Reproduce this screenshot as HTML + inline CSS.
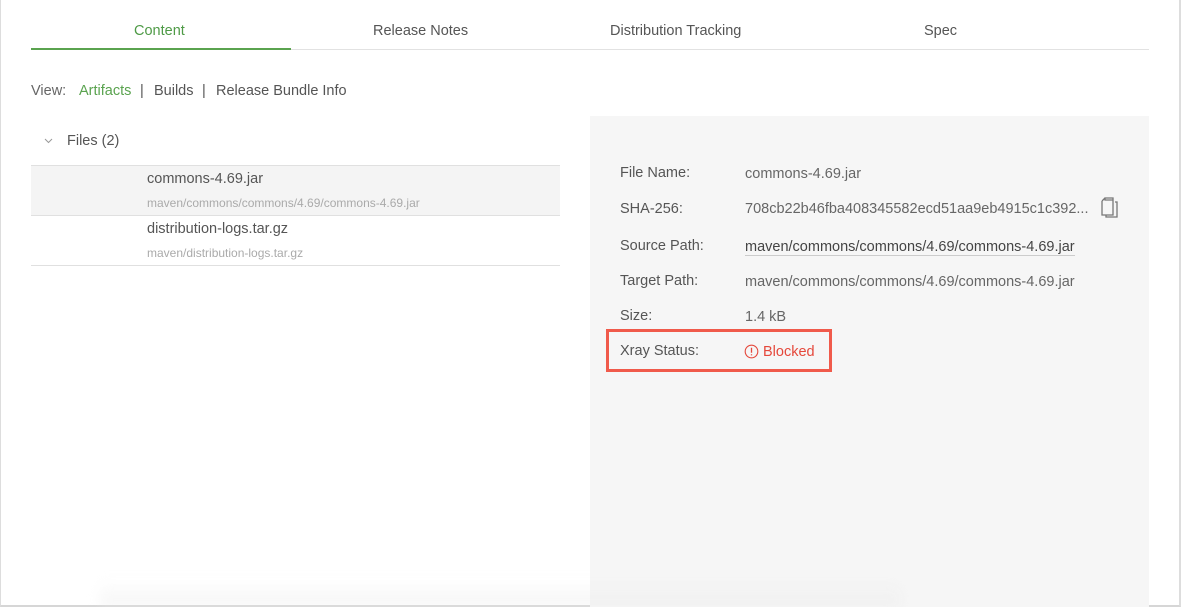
<!DOCTYPE html>
<html><head><style>
body{margin:0;width:1181px;height:607px;overflow:hidden;background:#fff;font-family:"Liberation Sans",sans-serif;position:relative}
.frame{position:absolute;left:0;top:0;border-left:1px solid #ddd;border-right:2px solid #ddd;border-bottom:2px solid #d6d6d6;box-sizing:border-box;width:1181px;height:607px}
.t{position:absolute;font-size:14.5px;color:#555;white-space:nowrap}
.tabline{position:absolute;left:31px;top:49px;width:1118px;height:1px;background:#e2e2e2}
.tabact{position:absolute;left:31px;top:48px;width:260px;height:2px;background:#5aa34f}
.gray{position:absolute;left:590px;top:116px;width:559px;height:491px;background:#f6f6f6}
.row{position:absolute;left:31px;width:529px;height:49px;border-top:1px solid #e0e0e0}
.lbl{position:absolute;left:620px;font-size:14.5px;color:#555;white-space:nowrap}
.val{position:absolute;left:745px;font-size:14.5px;color:#666;white-space:nowrap}
</style></head><body>
<div class="frame"></div>
<div class="tabline"></div><div class="tabact"></div>
<div class="t" style="left:134px;top:23px;color:#4e9a46">Content</div>
<div class="t" style="left:373px;top:23px">Release Notes</div>
<div class="t" style="left:610px;top:23px">Distribution Tracking</div>
<div class="t" style="left:924px;top:23px">Spec</div>
<div class="t" style="left:31px;top:83px;color:#666">View:</div>
<div class="t" style="left:79px;top:83px;color:#5aa34f">Artifacts</div>
<div class="t" style="left:140px;top:83px">|</div>
<div class="t" style="left:154px;top:83px">Builds</div>
<div class="t" style="left:202px;top:83px">|</div>
<div class="t" style="left:216px;top:83px">Release Bundle Info</div>
<svg style="position:absolute;left:44px;top:138px" width="9" height="6" viewBox="0 0 9 6"><path d="M1 1l3.5 3.5L8 1" fill="none" stroke="#999" stroke-width="1"/></svg>
<div class="t" style="left:67px;top:133px">Files (2)</div>
<div class="row" style="top:165px;background:#f4f4f4"></div>
<div class="row" style="top:215px"></div>
<div class="row" style="top:265px;height:0"></div>
<div class="t" style="left:147px;top:171px">commons-4.69.jar</div>
<div class="t" style="left:147px;top:196px;font-size:12px;color:#aaa">maven/commons/commons/4.69/commons-4.69.jar</div>
<div class="t" style="left:147px;top:221px">distribution-logs.tar.gz</div>
<div class="t" style="left:147px;top:246px;font-size:12px;color:#aaa">maven/distribution-logs.tar.gz</div>
<div class="gray"></div>
<div class="lbl" style="top:165px">File Name:</div><div class="val" style="top:166px">commons-4.69.jar</div>
<div class="lbl" style="top:201px">SHA-256:</div><div class="val" style="top:201px">708cb22b46fba408345582ecd51aa9eb4915c1c392...</div>
<svg style="position:absolute;left:1101px;top:197px" width="18" height="22" viewBox="0 0 18 22"><path d="M4 1h8v2H4zM1 4l3-3M1 4v14h11V3" fill="none" stroke="#777" stroke-width="1.3"/><path d="M14 5h2v15H5v-2" fill="none" stroke="#777" stroke-width="1.3"/></svg>
<div class="lbl" style="top:238px">Source Path:</div><div class="val" style="top:239px;color:#444;border-bottom:1px solid #ccc">maven/commons/commons/4.69/commons-4.69.jar</div>
<div class="lbl" style="top:273px">Target Path:</div><div class="val" style="top:274px">maven/commons/commons/4.69/commons-4.69.jar</div>
<div class="lbl" style="top:308px">Size:</div><div class="val" style="top:309px">1.4 kB</div>
<div style="position:absolute;left:606px;top:329px;width:226px;height:43px;border:3px solid #f05a4b;box-sizing:border-box"></div>
<div class="lbl" style="top:343px">Xray Status:</div>
<svg style="position:absolute;left:744px;top:344px" width="15" height="15" viewBox="0 0 15 15"><circle cx="7.5" cy="7.5" r="6.3" fill="none" stroke="#e5483b" stroke-width="1.1"/><path d="M7.5 3.8v5M7.5 10.2v1.2" stroke="#e5483b" stroke-width="1.3"/></svg>
<div class="val" style="top:344px;left:763px;color:#e5483b">Blocked</div>
<div style="position:absolute;left:100px;top:580px;width:800px;height:27px;background:linear-gradient(#fff0,#eaeaea80);filter:blur(6px)"></div>
</body></html>
